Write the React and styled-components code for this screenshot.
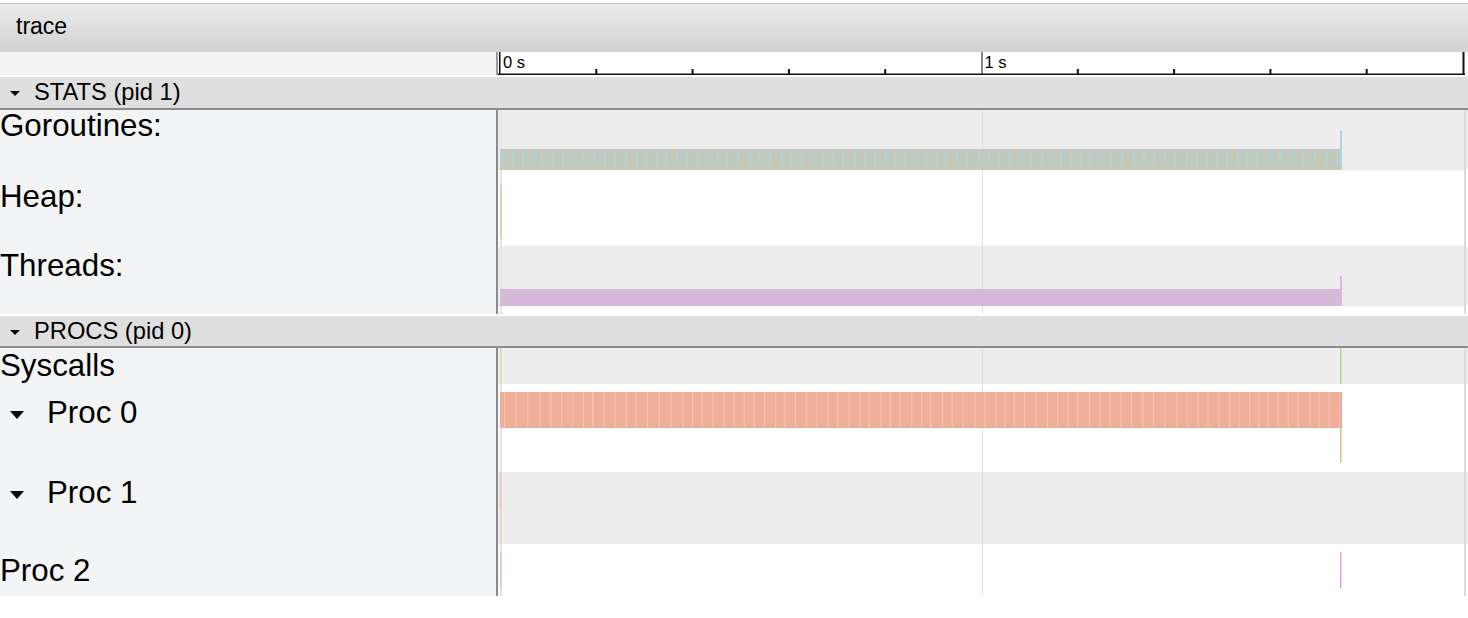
import React from 'react';
import styled, { createGlobalStyle } from 'styled-components';

const GlobalStyle = createGlobalStyle`
  html, body {
    margin: 0;
    padding: 0;
    background: #fff;
  }
  body {
    font-family: "Liberation Sans", Arial, Helvetica, sans-serif;
    color: #000;
  }
`;

// track area starts at x=498, everything inside lanes is drawn relative to that
const LANE_W = 970;
const BAR_END = 844;
const TICK = 96.3;

const Page = styled.div`
  width: 1468px;
  padding-top: 3px;
`;

const TitleBar = styled.div`
  height: 49px;
  box-sizing: border-box;
  border-top: 1px solid #c4c4c4;
  background: linear-gradient(#ebebeb, #d2d2d2);
  display: flex;
  align-items: center;
  padding: 0 0 3px 16px;
  font-size: 23px;
`;

const RulerRow = styled.div`
  display: flex;
  height: 23px;
  margin-bottom: 2px;
`;

const Side = styled.div`
  width: 496px;
  flex: none;
  background: #f3f4f6;
  border-right: 2px solid ${(p) => p.$edge || '#8a8a8a'};
`;

const Scale = styled.svg`
  display: block;
  flex: none;
  background: #fff;
`;

const GroupHeader = styled.div`
  height: ${(p) => p.$h}px;
  display: flex;
  align-items: center;
  padding-left: 10px;
  background: #dfdfdf;
  border-bottom: 2px solid #8c8c8c;
  font-size: 23.7px;
`;

const SmallCaret = styled.span`
  width: 0;
  height: 0;
  border-left: 5px solid transparent;
  border-right: 5px solid transparent;
  border-top: 5px solid #000;
  margin-right: 14px;
  margin-top: 2px;
`;

const Track = styled.div`
  display: flex;
  height: ${(p) => p.$h}px;
  margin-bottom: ${(p) => p.$gap || 0}px;
`;

const Label = styled(Side)`
  font-size: 31.3px;
  line-height: 24px;
  padding-top: ${(p) => p.$pad || 0}px;
  box-sizing: border-box;
  width: 498px;
  white-space: nowrap;
`;

const Caret = styled.span`
  display: inline-block;
  vertical-align: middle;
  width: 0;
  height: 0;
  border-left: 7.5px solid transparent;
  border-right: 7.5px solid transparent;
  border-top: 8px solid #000;
  margin: 0 23px 0 10px;
`;

const Lane = styled.div`
  flex: none;
  width: ${LANE_W}px;
  background: ${(p) => (p.$shade ? '#ededed' : '#fff')};
`;

const LaneArt = styled.svg`
  display: block;
`;

function stripes(seed, from, to) {
  let s = seed;
  const out = [];
  let x = from;
  while (x < to) {
    out.push(x);
    s = (s * 9301 + 49297) % 233280;
    x += 9 + (s / 233280) * 3;
  }
  return out;
}

const goStripes = stripes(7, 3, BAR_END - 3);
const procStripes = stripes(42, 6, BAR_END - 3);

function Grid({ h }) {
  return (
    <g>
      <rect x={2} y={0} width={2} height={h} fill="#e4e4e4" />
      <rect x={484} y={0} width={1} height={h} fill="#e0e0e0" />
      <rect x={966} y={0} width={2} height={h} fill="#dcdcdc" />
    </g>
  );
}

function Ruler() {
  const ticks = [];
  for (let k = 1; k < 10; k++) {
    if (k === 5) continue;
    const x = 2 + k * TICK;
    ticks.push(<rect key={k} x={x - 1} y={17} width={2} height={5} fill="#111" />);
  }
  const one = 2 + 5 * TICK;
  return (
    <RulerRow>
      <Side $edge="#9a9a9a" />
      <Scale width={LANE_W} height={23}>
        <rect x={1} y={0} width={1.5} height={23} fill="#111" />
        <text x={5} y={16} fontSize={16.5} fontFamily="Liberation Sans, Arial, sans-serif">0 s</text>
        <rect x={0} y={21.5} width={967} height={1.5} fill="#111" />
        {ticks}
        <rect x={one} y={0} width={1} height={23} fill="#111" />
        <text x={one + 3} y={16} fontSize={16.5} fontFamily="Liberation Sans, Arial, sans-serif">1 s</text>
        <rect x={964.5} y={0} width={2} height={23} fill="#111" />
      </Scale>
    </RulerRow>
  );
}

function Row({ h, shade, pad, label, caret, gap, children }) {
  return (
    <Track $h={h} $gap={gap}>
      <Label $pad={pad}>
        {caret && <Caret />}
        {label}
      </Label>
      <Lane $shade={shade}>
        <LaneArt width={LANE_W} height={h}>
          <Grid h={h} />
          {children}
        </LaneArt>
      </Lane>
    </Track>
  );
}

export default function App() {
  return (
    <Page>
      <GlobalStyle />
      <TitleBar>trace</TitleBar>
      <Ruler />

      <GroupHeader $h={31}>
        <SmallCaret />
        STATS (pid 1)
      </GroupHeader>
      <Row h={60} shade pad={4} label="Goroutines:">
        <rect x={2} y={39} width={BAR_END - 2} height={21} fill="#c3c8b9" />
        {goStripes.map((x, i) => (
          <rect key={i} x={x} y={39} width={1.6} height={17} fill="#a7d7e6" />
        ))}
        <rect x={842} y={21} width={2} height={35} fill="#a7d7e6" />
      </Row>
      <Row h={76} pad={15} label="Heap:">
        <rect x={2} y={15} width={2} height={53} fill="#ebcbb3" />
      </Row>
      <Row h={60} shade pad={8} label="Threads:">
        <rect x={2} y={43} width={BAR_END - 2} height={17} fill="#d6b9d8" />
        <rect x={842} y={30} width={2} height={13} fill="#d6b9d8" />
      </Row>
      <Row h={8} gap={2} />

      <GroupHeader $h={30}>
        <SmallCaret />
        PROCS (pid 0)
      </GroupHeader>
      <Row h={36} shade pad={6} label="Syscalls">
        <rect x={2} y={0} width={1.5} height={36} fill="#cfe0b4" />
        <rect x={842} y={0} width={1.5} height={36} fill="#b4d88a" />
      </Row>
      <Row h={88} pad={17} caret label="Proc 0">
        <rect x={2} y={8} width={BAR_END - 2} height={36} fill="#eeae98" />
        {procStripes.map((x, i) => (
          <rect key={i} x={x} y={8} width={1.2} height={36} fill="#f3c2b1" />
        ))}
        <rect x={842} y={8} width={2} height={36} fill="#f2a3a6" />
        <rect x={842} y={44} width={1.5} height={35} fill="#dbc47c" />
      </Row>
      <Row h={72} shade pad={9} caret label="Proc 1">
        <rect x={2} y={0} width={1.5} height={36} fill="#f1b9c0" />
        <rect x={2} y={36} width={1.5} height={36} fill="#e6d6a6" />
      </Row>
      <Row h={52} pad={15} label="Proc 2">
        <rect x={2} y={8} width={1.5} height={36} fill="#f1c2c8" />
        <rect x={842} y={8} width={1.5} height={36} fill="#f4a3b3" />
      </Row>
    </Page>
  );
}
